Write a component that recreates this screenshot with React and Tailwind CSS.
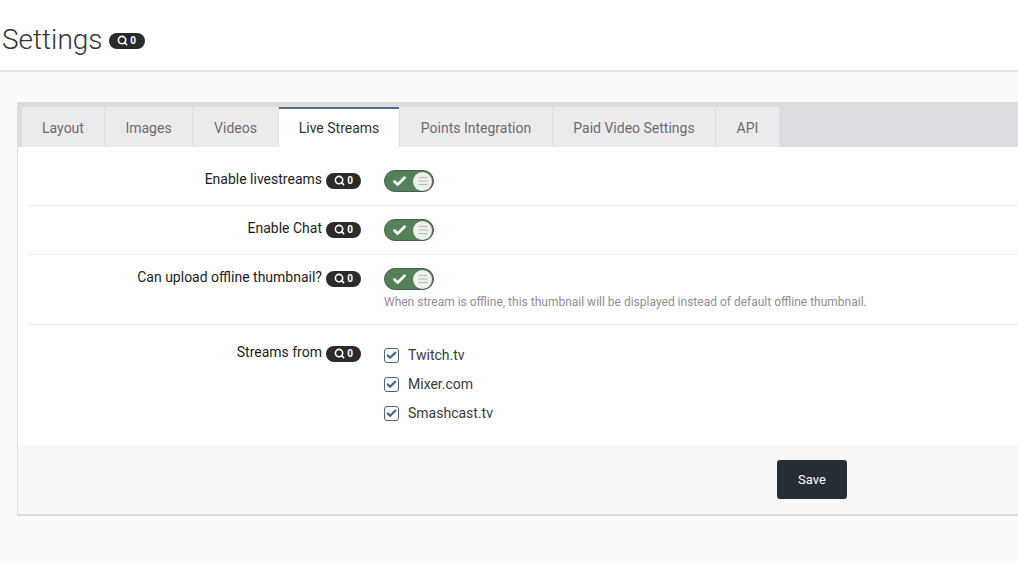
import { Search, Check, Menu } from 'lucide-react';

const tabs = [
  { name: 'Layout', w: 'w-[82px]' },
  { name: 'Images', w: 'w-[87px]' },
  { name: 'Videos', w: 'w-[85px]' },
  { name: 'Live Streams', w: 'w-[120px]', active: true },
  { name: 'Points Integration', w: 'w-[152px]' },
  { name: 'Paid Video Settings', w: 'w-[162px]' },
  { name: 'API', w: 'w-[63px]' },
];

function Badge({ wide }) {
  return (
    <span className={`inline-flex items-center justify-center ${wide ? 'w-[36px]' : 'w-[35px]'} h-[16px] mt-[2px] rounded-full bg-[#2b2b2b] text-white text-[10px] font-bold gap-[2px] shrink-0`}>
      <Search size={11} strokeWidth={3.5} />
      0
    </span>
  );
}

function Toggle() {
  return (
    <div className="flex items-center justify-between w-[50px] h-[22px] mt-[1px] rounded-full bg-[#53825a] border border-[#4a5a4e] pl-[7px] pr-[1px]">
      <Check size={15} strokeWidth={4.5} className="text-white" />
      <span className="flex items-center justify-center w-[19px] h-[19px] rounded-full bg-[#eef0ec]">
        <Menu size={12} strokeWidth={1.5} className="text-[#a9a4ad]" />
      </span>
    </div>
  );
}

function Row({ label, className, children }) {
  return (
    <div className={`flex border-b border-[#eeeeee] ${className}`}>
      <div className="w-[333px] flex justify-end items-center gap-[4px] h-fit text-[14px] text-[#1c1c1c]">
        {label}
        <Badge />
      </div>
      <div className="ml-[23px] flex-1">{children}</div>
    </div>
  );
}

function CheckItem({ label }) {
  return (
    <div className="flex items-center h-[29px] gap-[9px] text-[14px] text-[#3a3a3a]">
      <span className="flex items-center justify-center w-[15px] h-[15px] rounded-[3px] border border-[#4d6580] bg-[#f8fafc]">
        <Check size={11} strokeWidth={5} className="text-[#4d6580]" />
      </span>
      {label}
    </div>
  );
}

export default function App() {
  return (
    <div className="h-[563px] overflow-hidden bg-[#fafafa] font-['Roboto',sans-serif]">
      <header className="flex items-center gap-[6px] h-[72px] pl-[2px] pt-[9px] bg-white border-b-2 border-[#e2e2e2]">
        <h1 className="text-[28px] font-light text-[#333333]">Settings</h1>
        <Badge wide />
      </header>

      <div className="ml-[17px] mt-[30px] w-[1060px] h-[414px] bg-white border-l border-b-2 border-[#dedede]">
        <div className="flex items-end gap-[1px] h-[45px] pl-[4px] bg-[#dddde1]">
          {tabs.map(tab => (
            <div
              key={tab.name}
              className={`flex items-center justify-center h-[40px] text-[14px] ${tab.w} ${
                tab.active
                  ? 'bg-white text-[#333333] border-t-2 border-[#4f6b85]'
                  : 'pt-[2px] bg-[#ebebed] text-[#6c6c70]'
              }`}
            >
              {tab.name}
            </div>
          ))}
        </div>

        <div className="pl-[10px]">
          <Row label="Enable livestreams" className="h-[59px] pt-[22px]">
            <Toggle />
          </Row>
          <Row label="Enable Chat" className="h-[49px] pt-[12px]">
            <Toggle />
          </Row>
          <Row label="Can upload offline thumbnail?" className="h-[70px] pt-[12px]">
            <Toggle />
            <p className="mt-[3px] text-[12px] text-[#8f8f8f]">
              When stream is offline, this thumbnail will be displayed instead of default offline thumbnail.
            </p>
          </Row>
          <div className="flex pt-[17px] h-[120px]">
            <div className="w-[333px] flex justify-end items-center gap-[4px] h-fit text-[14px] text-[#1c1c1c]">
              Streams from
              <Badge />
            </div>
            <div className="ml-[23px] -mt-[1px]">
              <CheckItem label="Twitch.tv" />
              <CheckItem label="Mixer.com" />
              <CheckItem label="Smashcast.tv" />
            </div>
          </div>
        </div>

        <div className="h-[69px] bg-[#f7f7f7] pl-[759px] pt-[15px]">
          <button className="w-[70px] h-[39px] rounded-[3px] bg-[#252e34] text-white text-[13px] font-normal">
            Save
          </button>
        </div>
      </div>
    </div>
  );
}
